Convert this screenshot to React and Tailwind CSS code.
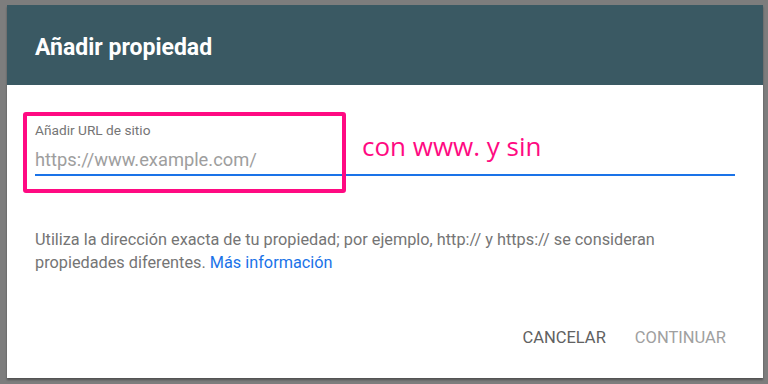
import React from 'react';

const App = () => {
  return (
    <div className="w-[768px] h-[384px] bg-[#7d7d7d] pt-[5px] pl-[7px] overflow-hidden" style={{ fontFamily: 'Roboto, "Liberation Sans", sans-serif' }}>
      {/* Dialog */}
      <div className="w-[756px] h-[373px] bg-white flex flex-col shadow-[0_2px_2px_rgba(0,0,0,0.35)]">
        <div className="h-[80px] bg-[#3a5963] flex items-center pl-[28px] pt-[5px]">
          <h2 className="text-white text-[23px] font-bold leading-[28px]">Añadir propiedad</h2>
        </div>

        <div className="flex-1 flex flex-col px-[28px]">
          {/* URL field */}
          <div className="relative mt-[37px] w-[700px]">
            <p className="text-[13.7px] text-[#757575] leading-[16px]">Añadir URL de sitio</p>
            <p className="text-[18.3px] text-[#9e9e9e] leading-[24px] mt-[10px] pb-[2px]">https://www.example.com/</p>
            <div className="h-[2px] bg-[#1a73e8]"></div>

            {/* Annotation */}
            <div className="absolute left-[-12px] top-[-10px] w-[323px] h-[81px] border-[4px] border-[#ff0a82] rounded-[3px]"></div>
            <span className="absolute left-[327px] top-[7px] text-[26px] leading-[34px] text-[#ff0a82]" style={{ fontFamily: '"Open Sans", sans-serif' }}>con www. y sin</span>
          </div>

          {/* Help text */}
          <p className="mt-[52px] text-[16.3px] leading-[23px] text-[#757575]">
            Utiliza la dirección exacta de tu propiedad; por ejemplo, http:// y https:// se consideran
            <br />
            propiedades diferentes. <a className="text-[#1a73e8]">Más información</a>
          </p>

          {/* Actions */}
          <div className="mt-auto mb-[30px] flex justify-end items-center gap-[29px] pr-[9px]">
            <button className="text-[16.5px] leading-[20px] text-[#616161] uppercase">Cancelar</button>
            <button className="text-[16.5px] leading-[20px] text-[#a0a0a0] uppercase">Continuar</button>
          </div>
        </div>
      </div>
    </div>
  );
};

export default App;
